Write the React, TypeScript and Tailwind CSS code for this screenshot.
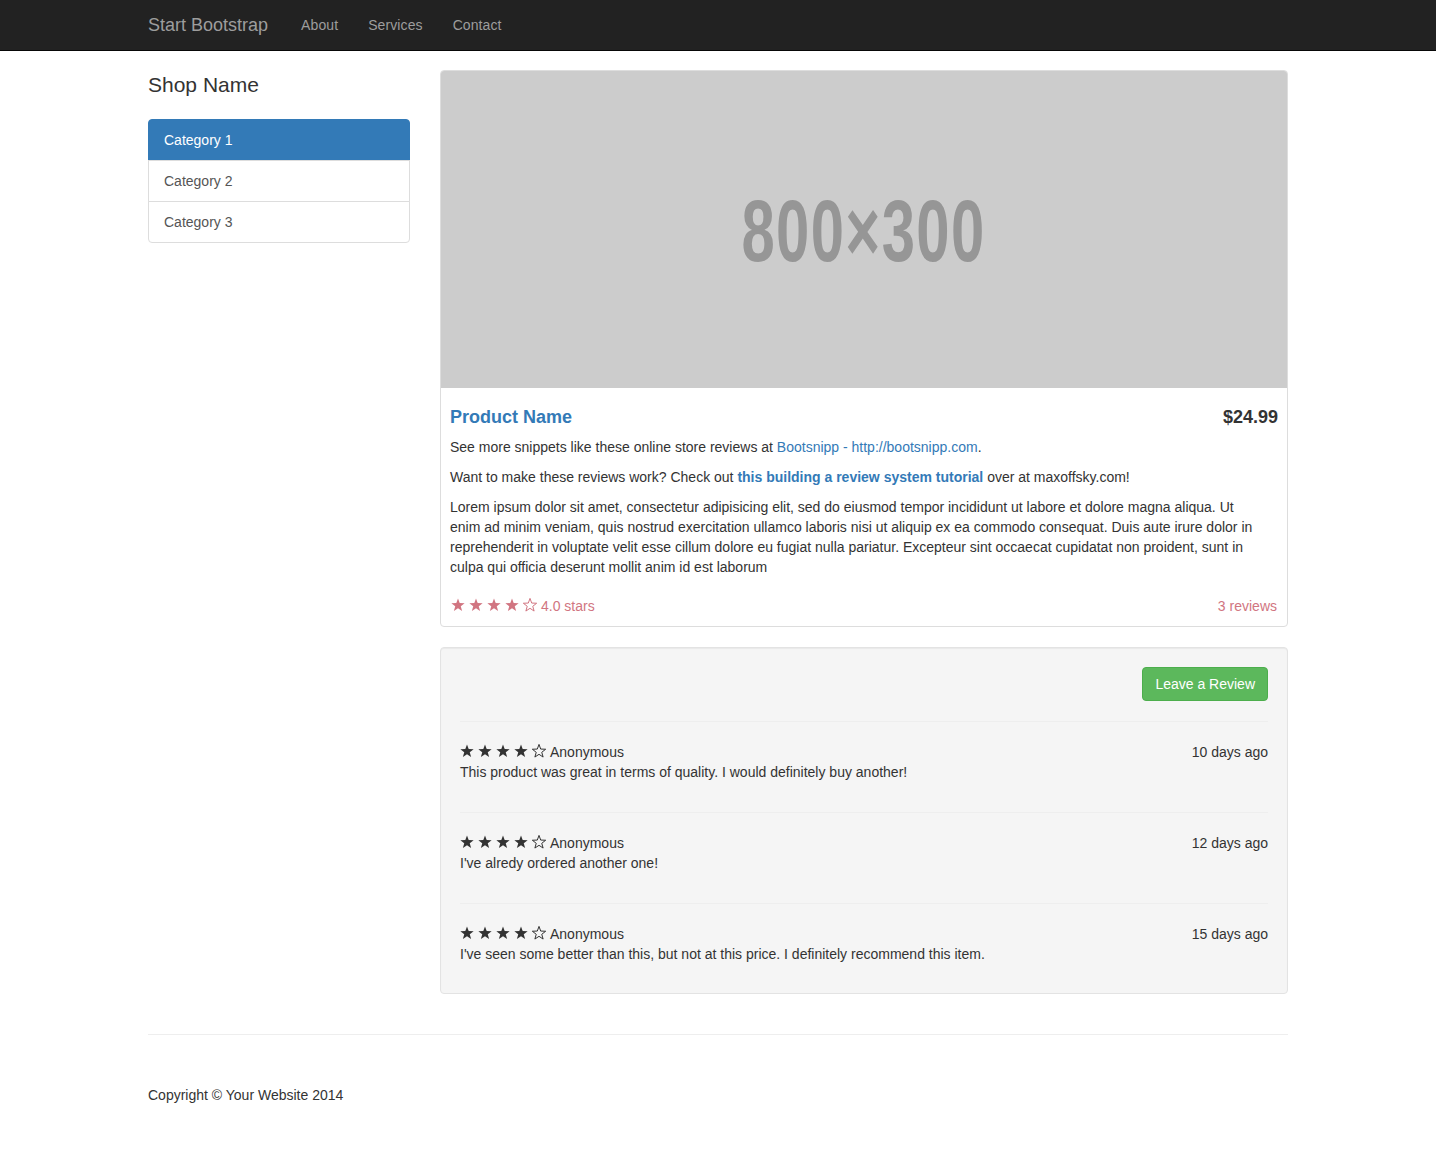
import React from 'react';

const STAR_POINTS =
  '7,0.4 8.7,5.05 13.66,5.24 9.76,8.3 11.11,13.06 7,10.3 2.89,13.06 4.24,8.3 0.34,5.24 5.3,5.05';

const Star = ({ filled }: { filled: boolean }) => (
  <svg width="14" height="14" viewBox="0 0 14 14" className="inline-block shrink-0">
    {filled ? (
      <polygon points={STAR_POINTS} fill="currentColor" />
    ) : (
      <polygon points={STAR_POINTS} fill="none" stroke="currentColor" strokeWidth="1" strokeLinejoin="round" />
    )}
  </svg>
);

const Stars = ({ count }: { count: number }) => (
  <span className="inline-flex items-center gap-[4px] relative top-[-1px]">
    {[0, 1, 2, 3, 4].map((i) => (
      <Star key={i} filled={i < count} />
    ))}
  </span>
);

const CATEGORIES = ['Category 1', 'Category 2', 'Category 3'];

const REVIEWS = [
  { ago: '10 days ago', text: 'This product was great in terms of quality. I would definitely buy another!' },
  { ago: '12 days ago', text: "I've alredy ordered another one!" },
  { ago: '15 days ago', text: "I've seen some better than this, but not at this price. I definitely recommend this item." },
];

export default function App() {
  return (
    <div className="min-h-screen bg-white text-[14px] leading-5 text-[#333] font-['Liberation_Sans',Arial,sans-serif]">
      <nav className="h-[51px] bg-[#222] border-b border-[#080808]">
        <div className="w-[1170px] mx-auto px-[15px] h-[50px] flex items-center">
          <a className="text-[18px] leading-5 text-[#9d9d9d] pr-[18px]">Start Bootstrap</a>
          {['About', 'Services', 'Contact'].map((l) => (
            <a key={l} className="px-[15px] text-[#9d9d9d] tracking-[0.1px]">
              {l}
            </a>
          ))}
        </div>
      </nav>

      <div className="w-[1170px] mx-auto px-[15px] pt-[19px]">
        <div className="flex gap-[30px]">
          <div className="w-[262px] shrink-0">
            <p className="text-[21px] leading-[29px] font-light mb-[20px]">Shop Name</p>
            <div className="flex flex-col">
              {CATEGORIES.map((c, i) => (
                <a
                  key={c}
                  className={
                    i === 0
                      ? 'px-[15px] py-[10px] border border-[#337ab7] bg-[#337ab7] text-white rounded-t-[4px] -mb-px'
                      : i === CATEGORIES.length - 1
                        ? 'px-[15px] py-[10px] border border-[#ddd] bg-white text-[#555] rounded-b-[4px]'
                        : 'px-[15px] py-[10px] border border-[#ddd] bg-white text-[#555] -mb-px'
                  }
                >
                  {c}
                </a>
              ))}
            </div>
          </div>

          <div className="flex-1">
            <div className="border border-[#ddd] rounded-[4px] mb-[20px] bg-white">
              <div className="h-[317px] bg-[#ccc] rounded-t-[3px] flex items-center justify-center overflow-hidden">
                <span className="text-[88px] leading-none font-bold text-[#969696] scale-x-[0.68] tracking-[2px] relative top-[1px]">
                  800×300
                </span>
              </div>
              <div className="p-[9px]">
                <div className="flex justify-between mt-[10px] mb-[10px] text-[18px] leading-[20px] font-bold">
                  <a className="text-[#337ab7]">Product Name</a>
                  <span>$24.99</span>
                </div>
                <p className="mb-[10px]">
                  See more snippets like these online store reviews at{' '}
                  <a className="text-[#337ab7]">Bootsnipp - http://bootsnipp.com</a>.
                </p>
                <p className="mb-[10px]">
                  Want to make these reviews work? Check out{' '}
                  <strong>
                    <a className="text-[#337ab7]">this building a review system tutorial</a>
                  </strong>{' '}
                  over at maxoffsky.com!
                </p>
                <p className="mb-[10px]">
                  Lorem ipsum dolor sit amet, consectetur adipisicing elit, sed do eiusmod tempor incididunt ut labore et
                  dolore magna aliqua. Ut
                  <br />
                  enim ad minim veniam, quis nostrud exercitation ullamco laboris nisi ut aliquip ex ea commodo consequat.
                  Duis aute irure dolor in
                  <br />
                  reprehenderit in voluptate velit esse cillum dolore eu fugiat nulla pariatur. Excepteur sint occaecat
                  cupidatat non proident, sunt in
                  <br />
                  culpa qui officia deserunt mollit anim id est laborum
                </p>
              </div>
              <div className="px-[10px] text-[#d17581]">
                <p className="flex justify-between mb-[10px]">
                  <span className="inline-flex items-center gap-[4px]">
                    <Stars count={4} />
                    4.0 stars
                  </span>
                  <span>3 reviews</span>
                </p>
              </div>
            </div>

            <div className="bg-[#f5f5f5] border border-[#e3e3e3] rounded-[4px] p-[19px] mb-[20px] shadow-[inset_0_1px_1px_rgba(0,0,0,0.05)]">
              <div className="flex justify-end">
                <a className="px-[12px] py-[6px] bg-[#5cb85c] border border-[#4cae4c] rounded-[4px] text-white">
                  Leave a Review
                </a>
              </div>
              {REVIEWS.map((r, i) => (
                <div key={r.ago}>
                  <hr className={i === 0 ? 'my-5 border-[#eee]' : 'mt-[30px] mb-5 border-[#eee]'} />
                  <div className="flex justify-between">
                    <span className="inline-flex items-center gap-[4px]">
                      <Stars count={4} />
                      Anonymous
                    </span>
                    <span>{r.ago}</span>
                  </div>
                  <p className="mb-[10px]">{r.text}</p>
                </div>
              ))}
            </div>
          </div>
        </div>
      </div>

      <div className="w-[1170px] mx-auto px-[15px] pb-[50px]">
        <hr className="mt-5 border-[#eee]" />
        <footer className="mt-[50px]">
          <p className="mb-[10px]">Copyright © Your Website 2014</p>
        </footer>
      </div>
    </div>
  );
}
